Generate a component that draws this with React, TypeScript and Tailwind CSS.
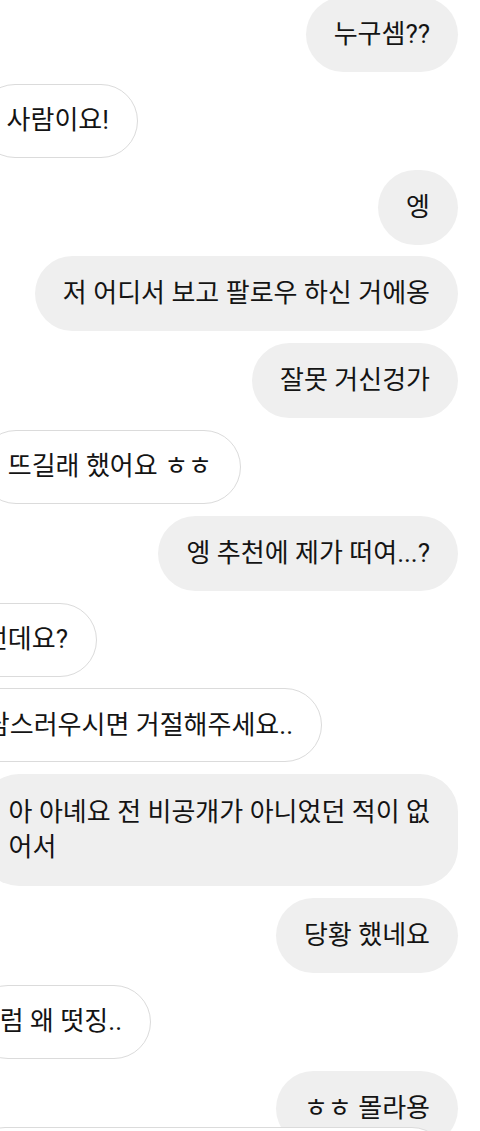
import React from "react";

type Msg = {
  side: "me" | "them";
  text: React.ReactNode;
  // right edge of a "them" bubble (they run off the left side)
  edge?: number;
  multi?: boolean;
};

const MESSAGES: Msg[] = [
  { side: "me", text: "누구셈??" },
  { side: "them", text: "사람이요!", edge: 138 },
  { side: "me", text: "엥" },
  { side: "me", text: "저 어디서 보고 팔로우 하신 거에옹" },
  { side: "me", text: "잘못 거신겅가" },
  { side: "them", text: "뜨길래 했어요 ㅎㅎ", edge: 241 },
  { side: "me", text: "엥 추천에 제가 떠여...?" },
  { side: "them", text: "런데요?", edge: 97 },
  { side: "them", text: "담스러우시면 거절해주세요..", edge: 322 },
  {
    side: "me",
    text: (
      <>
        아 아녜요 전 비공개가 아니었던 적이 없
        <br />
        어서
      </>
    ),
    multi: true,
  },
  { side: "me", text: "당황 했네요" },
  { side: "them", text: "럼 왜 떳징..", edge: 151 },
  { side: "me", text: "ㅎㅎ 몰라용" },
];

const edgeWidth: Record<number, string> = {
  138: "w-[138px]",
  241: "w-[241px]",
  97: "w-[97px]",
  322: "w-[322px]",
  151: "w-[151px]",
};

export default function App() {
  return (
    <div
      className="relative w-[480px] h-[1131px] overflow-hidden bg-white text-[26px] leading-[35px] text-[#141414]"
      style={{ fontFamily: 'Roboto, "Noto Sans CJK KR", sans-serif' }}
    >
      {/* Message list */}
      <div className="-mt-[3px] flex flex-col gap-[11.8px]">
        {MESSAGES.map((m, i) =>
          m.side === "me" ? (
            <div key={i} className="flex justify-end pr-[22px]">
              <div
                className={[
                  "shrink-0 whitespace-nowrap bg-[#efefef] px-7",
                  m.multi ? "rounded-[38px] py-[21px]" : "rounded-full py-5",
                ].join(" ")}
              >
                {m.text}
              </div>
            </div>
          ) : (
            <div key={i} className={["flex justify-end", edgeWidth[m.edge ?? 138]].join(" ")}>
              <div className="shrink-0 whitespace-nowrap rounded-full border-[1.5px] border-[#dbdbdb] bg-white px-7 py-[18.5px]">
                {m.text}
              </div>
            </div>
          )
        )}
      </div>

      {/* Composer bar peeking in at the bottom */}
      <div className="absolute left-[-30px] top-[1127px] h-[70px] w-[477px] rounded-[35px] border-[1.5px] border-[#dbdbdb] bg-white" />
    </div>
  );
}
